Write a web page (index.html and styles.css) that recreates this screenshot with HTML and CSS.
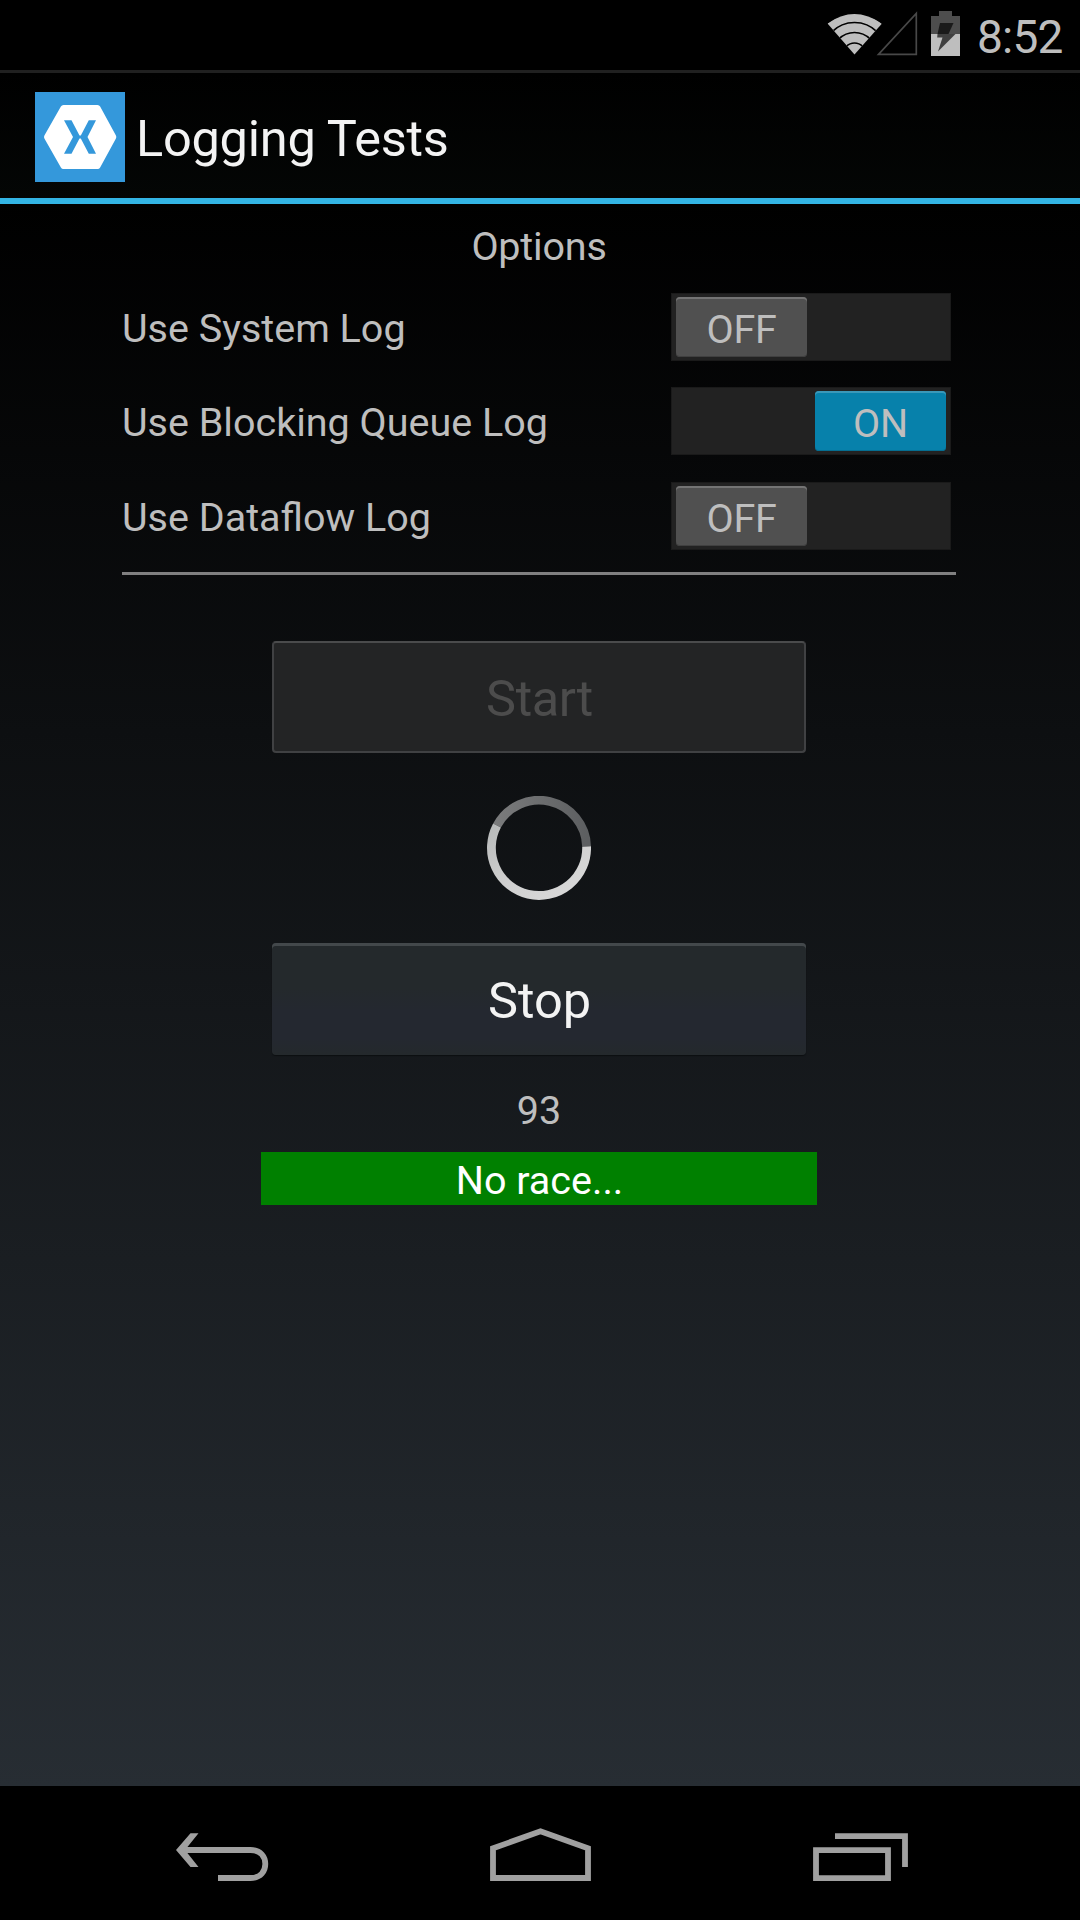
FILE: index.html
```html
<!DOCTYPE html>
<html lang="en">
<head>
<meta charset="utf-8">
<title>Logging Tests</title>
<link rel="stylesheet" href="styles.css">
</head>
<body>
<div class="statusbar">
  <svg class="status-icons" viewBox="826 0 136 70">
    <clipPath id="fan"><path d="M854.5 54.5L827.5 23.5Q854 4.500 882 23.500Z"/></clipPath>
    <g clip-path="url(#fan)">
      <circle cx="854.5" cy="54.500" r="41" fill="#bebebe"/>
      <g fill="none" stroke="#000" stroke-width="1.700">
        <circle cx="854.500" cy="54.500" r="32"/>
        <circle cx="854.500" cy="54.500" r="22"/>
        <circle cx="854.500" cy="54.500" r="11.500"/>
      </g>
    </g>
    <path d="M878.500 54.300H916.300V13.500Z" fill="none" stroke="#484848" stroke-width="1.700"/>
    <path d="M931 34V16H939V11H952V16H960V34Z" fill="#4d4d4d"/>
    <path d="M931 34H960V56H931Z" fill="#bebebe"/>
    <path d="M940 23H953.500L948.500 34H937.500Z" fill="#1a1a1a"/>
    <path d="M937.500 34H955.500L938 51.500L942.500 37.500H937.200Z" fill="#404040"/>
  </svg>
  <span class="clock">8:52</span>
</div>
<header class="actionbar">
  <svg class="app-icon" viewBox="0 0 90 90">
    <path fill="#3498db" d="M0 0H90V90H0Z"/>
    <path fill="#fff" stroke="#fff" stroke-width="6" stroke-linejoin="round" d="M28.500 16H62.500L78.300 45L62.500 74H28.500L12 45Z"/>
    <path fill="#3498db" d="M29 28.200H36.500L44.500 43.500H45.800L53.800 28.200H61L52.500 45L61 61.800H53.800L45.800 46.500H44.500L36.500 61.800H29L38 45Z"/>
  </svg>
  <h1 class="title">Logging Tests</h1>
</header>
<main class="content">
  <h2 class="heading">Options</h2>
  <div class="options">
    <div class="option"><span class="label">Use System Log</span><span class="track"><span class="thumb">OFF</span></span></div>
    <div class="option"><span class="label">Use Blocking Queue Log</span><span class="track on"><span class="thumb">ON</span></span></div>
    <div class="option"><span class="label">Use Dataflow Log</span><span class="track"><span class="thumb">OFF</span></span></div>
  </div>
  <button class="button start" disabled>Start</button>
  <svg class="spinner" viewBox="-52 -52 104 104">
    <defs>
      <linearGradient id="bright" x1="0" y1="0" x2="1" y2="1"><stop offset="0" stop-color="#b8baba"/><stop offset=".5" stop-color="#d0d0d0"/><stop offset="1" stop-color="#dadada"/></linearGradient>
      <linearGradient id="dim"><stop offset="0" stop-color="#7a7b7c"/><stop offset="1" stop-color="#5d5f61"/></linearGradient>
    </defs>
    <path d="M-42 -22.500A47.600 47.600 0 0 1 47.600 -1.500" fill="none" stroke="url(#dim)" stroke-width="8.800"/>
    <path d="M47.600 -1.500A47.600 47.600 0 1 1 -42 -22.500" fill="none" stroke="url(#bright)" stroke-width="8.800"/>
  </svg>
  <button class="button stop">Stop</button>
  <div class="count">93</div>
  <div class="result">No race...</div>
</main>
<nav class="navbar">
  <svg viewBox="63 1786 318 134"><g fill="none" stroke="#a0a0a0" stroke-width="5.800"><path d="M184 1850H250.500C261 1850 265.300 1857 265.300 1864S261 1878 250.500 1878H218"/></g><path fill="#a0a0a0" d="M176 1850L190.500 1833.300H198.500L185 1850L198.500 1867H190.500Z"/></svg>
  <svg viewBox="381 1786 318 134"><path fill="none" stroke="#a0a0a0" stroke-width="5.800" d="M493 1878V1848.300L540.500 1831.300L588 1848.300V1878Z"/></svg>
  <svg viewBox="699 1786 318 134"><path fill="none" stroke="#a0a0a0" stroke-width="5.800" d="M816 1850.200H888V1878.100H816ZM835 1836.200H905V1867"/></svg>
</nav>
</body>
</html>
```
FILE: styles.css
```css
* { box-sizing: border-box; }
body {
  margin: 0;
  width: 1080px;
  height: 1920px;
  display: flex;
  flex-direction: column;
  overflow: hidden;
  background: #000;
  color: #bebebe;
  font-family: Roboto, "Liberation Sans", sans-serif;
  font-size: 39.500px;
}
h1, h2 { margin: 0; font-weight: 400; }
svg { display: block; }

.statusbar {
  height: 73px;
  border-bottom: 3px solid #202020;
  display: flex;
  justify-content: flex-end;
  padding-right: 16px;
}
.status-icons { width: 136px; height: 70px; }
.clock { width: 102px; padding-left: 15px; line-height: 74px; font-size: 46px; letter-spacing: -.8px; white-space: nowrap; }

.actionbar {
  height: 131px;
  display: flex;
  padding: 19px 0 0 35px;
  background: linear-gradient(#000, #040605);
  border-bottom: 6px solid #33b5e5;
}
.app-icon { width: 90px; height: 90px; }
.title { padding-left: 11px; color: #f3f3f3; font-size: 50.500px; line-height: 94px; letter-spacing: -.25px; }

.content {
  height: 1582px;
  display: flex;
  flex-direction: column;
  align-items: center;
  padding-right: 2px;
  background: linear-gradient(#000, #272d33);
}
.heading { font-size: inherit; line-height: 85px; letter-spacing: -.2px; }
.options {
  width: 834px;
  height: 286px;
  padding-top: 4px;
  display: flex;
  flex-direction: column;
  gap: 27px;
  border-bottom: 3px solid #808080;
}
.option { height: 67px; display: flex; justify-content: space-between; padding-right: 5px; }
.option:last-child { margin-top: 1px; }
.label { line-height: 71px; }
.track {
  width: 280px;
  height: 68px;
  display: flex;
  padding: 3px 4px;
  background: #222;
  border: 1px solid #1a1a1a;
}
.track.on { justify-content: flex-end; }
.thumb {
  width: 131px;
  height: 60px;
  border-radius: 4px;
  text-align: center;
  line-height: 65px;
  letter-spacing: -.3px;
  background: #505050;
  box-shadow: inset 0 2px #747474, inset 0 -1px #404040;
}
.on .thumb { background: #0781ab; box-shadow: inset 0 2px #3a98b9, inset 0 -1px #056e91; }

.button {
  width: 534px;
  height: 112px;
  padding: 2px 0 0;
  border: 0;
  border-radius: 4px;
  font: 50.500px Roboto, "Liberation Sans", sans-serif;
}
.start {
  margin-top: 66px;
  padding-left: 1px;
  background: #232425;
  border: 2px solid #404143;
  border-top-color: #4a4b4c;
  color: #4c4c4c;
  letter-spacing: -.4px;
}
.spinner { width: 104px; height: 104px; margin: 43px 0; }
.stop {
  padding-left: 1px;
  color: #f3f3f3;
  background: linear-gradient(#24292c 0 40%, #242830 60% 85%, #24292c);
  box-shadow: inset 0 3px #43484b, 0 1px 1px #0c0f11;
}
.count { margin-top: 14px; height: 83px; line-height: 83px; }
.result { width: 556px; height: 53px; padding-left: 1px; line-height: 58px; text-align: center; background: #008000; color: #fff; }

.navbar { height: 134px; padding: 0 63px; display: flex; background: #000; }
.navbar svg { width: 318px; height: 134px; }
```
